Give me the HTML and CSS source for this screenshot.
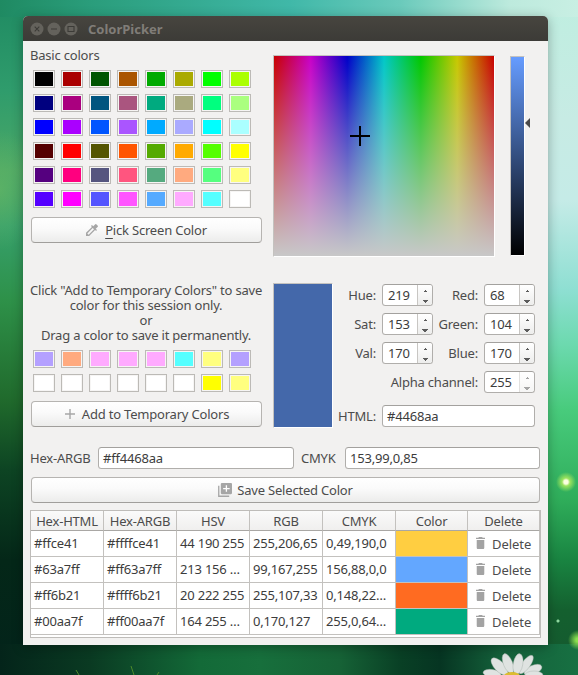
FILE: index.html
```html
<!DOCTYPE html>
<html lang="en">
<head>
<meta charset="utf-8">
<title>ColorPicker</title>
<link rel="stylesheet" href="styles.css">
</head>
<body>
<svg class="daisy" width="64" height="22" viewBox="0 0 64 22">
  <g fill="#dfe3e1" stroke="#a3afa8" stroke-width=".4">
    <ellipse cx="10" cy="20.5" rx="9" ry="4" transform="rotate(8 10 20.5)"/>
    <ellipse cx="51" cy="17" rx="9.5" ry="4.6" transform="rotate(-24 51 17)"/>
    <ellipse cx="52" cy="22" rx="9" ry="4"/>
    <ellipse cx="17.5" cy="13.5" rx="11" ry="5" transform="rotate(46 17.5 13.5)"/>
    <ellipse cx="44" cy="11.5" rx="11" ry="4.2" transform="rotate(-54 44 11.5)"/>
    <ellipse cx="26" cy="10.5" rx="10.5" ry="4.6" transform="rotate(68 26 10.5)"/>
    <ellipse cx="36" cy="11" rx="10.5" ry="4.8" transform="rotate(-80 36 11)"/>
  </g>
  <ellipse cx="30" cy="23" rx="8" ry="4" fill="#dcbc30"/>
</svg>
<svg class="grass" width="100" height="14" viewBox="0 0 100 14" fill="none" stroke="#4f8a2a">
  <path d="M6 14 3 9M61 14 58 5M84 14 86 11"/>
</svg>
<main class="window">
  <header class="titlebar">
    <svg width="48" height="14" viewBox="0 0 48 14">
      <g fill="#64625c"><circle cx="7" cy="7" r="6.5"/><circle cx="24" cy="7" r="6.5"/><circle cx="41" cy="7" r="6.5"/></g>
      <path d="M4.7 4.7l4.6 4.6M9.3 4.7 4.7 9.3M21 7h6M38 4.5h6v5h-6z" fill="none" stroke="#3c3b37" stroke-width="1.1"/>
    </svg>
    <h1>ColorPicker</h1>
  </header>

  <div class="content">
    <section class="top">
      <div class="left">
        <div class="label basic">Basic colors</div>
        <div class="swatches" id="basic"></div>
        <button class="btn pick">
          <svg width="16" height="16" viewBox="0 0 24 24" fill="#a6a6a6"><path d="M20.71 5.63l-2.34-2.34a1 1 0 0 0-1.41 0l-3.12 3.12-1.93-1.91-1.41 1.41 1.42 1.42L3 16.25V21h4.75l8.92-8.92 1.42 1.42 1.41-1.41-1.92-1.92 3.12-3.12c.4-.4.4-1.03.01-1.42zM6.92 19 5 17.08l8.06-8.06 1.92 1.92L6.92 19z"/></svg>
          <span><u>P</u>ick Screen Color</span>
        </button>
      </div>
      <div class="field"><svg class="cross" width="20" height="20"><path d="M10 0v20M0 10h20" stroke="#000" stroke-width="2"/></svg></div>
      <div class="value"></div>
      <svg class="arrow" width="6" height="10"><path d="M0 5 5 0v10z" fill="#4a4a4a"/></svg>
    </section>

    <section class="middle">
      <div class="left">
        <div class="hint"><div>Click "Add to Temporary Colors" to save</div><div>color for this session only.</div><div>or</div><div>Drag a color to save it permanently.</div></div>
        <div class="swatches" id="temporary"></div>
        <button class="btn add">
          <svg width="12" height="12"><path d="M6 1v10M1 6h10" stroke="#a6a6a6" stroke-width="1.4"/></svg>
          <span>Add to Temporary Colors</span>
        </button>
      </div>
      <div class="preview"></div>
      <div class="form">
        <label>Hue:</label><div class="spin"><span>219</span><i></i></div>
        <label>Red:</label><div class="spin"><span>68</span><i></i></div>
        <label>Sat:</label><div class="spin"><span>153</span><i></i></div>
        <label>Green:</label><div class="spin"><span>104</span><i></i></div>
        <label>Val:</label><div class="spin"><span>170</span><i></i></div>
        <label>Blue:</label><div class="spin"><span>170</span><i></i></div>
        <label class="alpha">Alpha channel:</label><div class="spin off"><span>255</span><i></i></div>
        <label class="html">HTML:</label><div class="input html-in">#4468aa</div>
      </div>
    </section>

    <section class="codes">
      <label class="l-argb">Hex-ARGB</label><div class="input argb">#ff4468aa</div>
      <label class="l-cmyk">CMYK</label><div class="input cmyk">153,99,0,85</div>
    </section>

    <button class="btn save">
      <svg width="14" height="14" viewBox="0 0 15 15"><path d="M.8 3v11.2H12" fill="none" stroke="#a6a6a6" stroke-width="1.4"/><rect x="3" y="0" width="12" height="12" rx="1.2" fill="#a6a6a6"/><path d="M9 2.5v7M5.5 6h7" stroke="#fff" stroke-width="1.4"/></svg>
      <span>Save Selected Color</span>
    </button>

    <div class="table" id="table"></div>
  </div>
</main>
<script src="app.js"></script>
</body>
</html>
```
FILE: app.js
```js
const basic = [
  '000000 aa0000 005500 aa5500 00aa00 aaaa00 00ff00 aaff00',
  '00007f aa007f 00557f aa557f 00aa7f aaaa7f 00ff7f aaff7f',
  '0000ff aa00ff 0055ff aa55ff 00aaff aaaaff 00ffff aaffff',
  '550000 ff0000 555500 ff5500 55aa00 ffaa00 55ff00 ffff00',
  '55007f ff007f 55557f ff557f 55aa7f ffaa7f 55ff7f ffff7f',
  '5500ff ff00ff 5555ff ff55ff 55aaff ffaaff 55ffff ffffff'
];
const temporary = [
  'b4a0ff ffaa7f ffaaff ffaaff ffaaff 55ffff ffff7f b4a0ff',
  'ffffff ffffff ffffff ffffff ffffff ffffff ffff00 ffff7f'
];
const fill = (id, rows) => {
  document.getElementById(id).innerHTML = rows.join(' ').split(' ')
    .map(c => `<span class="swatch" style="background-color:#${c}"></span>`).join('');
};
fill('basic', basic);
fill('temporary', temporary);

const heads = ['Hex-HTML', 'Hex-ARGB', 'HSV', 'RGB', 'CMYK', 'Color', 'Delete'];
const saved = [
  ['#ffce41', '#ffffce41', '44 190 255', '255,206,65', '0,49,190,0'],
  ['#63a7ff', '#ff63a7ff', '213 156 …', '99,167,255', '156,88,0,0'],
  ['#ff6b21', '#ffff6b21', '20 222 255', '255,107,33', '0,148,22…'],
  ['#00aa7f', '#ff00aa7f', '164 255 …', '0,170,127', '255,0,64…']
];
const trash = '<svg width="9" height="12" viewBox="0 0 10 12" preserveAspectRatio="none" fill="#a3a3a3"><path d="M3.2 0h3.6l.6.8H10v1.3H0V.8h2.6zM.8 3h8.4v7.7c0 .7-.5 1.3-1.3 1.3H2.1c-.8 0-1.3-.6-1.3-1.3z"/></svg>';
document.getElementById('table').innerHTML =
  heads.map(h => `<div class="th">${h}</div>`).join('') +
  saved.map(r => r.map(t => `<div class="td">${t}</div>`).join('') +
    `<div class="td chip" style="background-color:${r[0]}"></div><div class="td del">${trash}<span>Delete</span></div>`).join('');
```
FILE: styles.css
```css
* { box-sizing: border-box; }

body {
  margin: 0;
  width: 578px;
  height: 675px;
  padding: 16px 30px 0 23px;
  position: relative;
  overflow: hidden;
  font: 13px/15px "Noto Sans", "Open Sans", sans-serif;
  letter-spacing: -0.2px;
  color: #4c4c4c;
  background:
    radial-gradient(circle at 566px 482px, #fbffe0 0 2px, #9be35e 4px, rgba(90, 205, 90, 0) 10px),
    radial-gradient(circle at 578px 640px, #8be050 0 2px, rgba(60, 170, 70, 0) 10px),
    radial-gradient(circle at 558px 621px, #8fd9a0 0 1px, transparent 2px),
    radial-gradient(ellipse 40px 60px at 0 190px, rgba(105, 185, 100, .6), transparent),
    linear-gradient(to right, #1f8a62 0, #2a9d7b 90px, #40b8a8 290px, #6acabb 400px, #bdeadd 510px, #c8efe3 578px) 0 0 / 578px 17px no-repeat,
    linear-gradient(to right, #04241a, #0a3a22 90px, #136a38 200px, #176f3c 260px, #166236 340px, #094025 400px, #063522 440px, #14603a 500px, #177042 578px) 0 644px / 578px 31px no-repeat,
    linear-gradient(#1f8a62 0, #2f9c6c 90px, #4aa766 170px, #36a06c 225px, #2e9149 300px, #206a2c 400px, #0d4423 470px, #042718 560px, #03241a 650px) 0 0 / 290px 675px no-repeat,
    linear-gradient(#bfeee0 0, #c7ebe4 120px, #c5ebe7 200px, #8edfd2 290px, #6cd9ae 345px, #48cb7c 410px, #2fad5a 500px, #198441 560px, #14602f 610px, #15582f 675px);
}

.daisy { position: absolute; left: 482px; top: 653px; }
.grass { position: absolute; left: 73px; top: 661px; }

.window {
  position: relative;
  width: 525px;
  height: 629px;
  background: #f2f1f0;
  border-radius: 5px 5px 0 0;
  box-shadow: 0 2px 12px rgba(0, 0, 0, .3);
}

.titlebar {
  height: 25px;
  display: flex;
  align-items: center;
  gap: 10.5px;
  padding-left: 6.5px;
  border-radius: 5px 5px 0 0;
  background: linear-gradient(#47453f, #3c3b37);
}
h1 { margin: 1px 0 0; font-size: 13px; line-height: 15px; letter-spacing: 0; color: #807d78; }

.content { padding: 0 7px; }
.top { display: flex; height: 242px; }
.left { width: 243px; flex: none; }
.basic { padding-top: 7px; height: 29px; letter-spacing: -.2px; }

.swatches {
  display: grid;
  grid-template-columns: repeat(8, 22px);
  grid-auto-rows: 18px;
  gap: 6px;
  margin-left: 3px;
}
.swatch { border: 1px solid #bcbab6; box-shadow: inset 0 0 0 1px #f6f5f4; }

.btn {
  display: flex;
  align-items: center;
  justify-content: center;
  gap: 5px;
  width: 231px;
  height: 26px;
  margin: 9px 0 0 1px;
  padding: 0;
  border: 1px solid #b6b4b1;
  border-bottom-color: #a09e9b;
  border-radius: 4px;
  background: linear-gradient(#fff, #fafafa 45%, #ececeb);
  font: inherit;
  letter-spacing: inherit;
  color: inherit;
}
.pick { padding-right: 2px; }
.pick u { text-underline-offset: 3px; }
.add { gap: 6px; }

.field {
  position: relative;
  width: 222px;
  height: 202px;
  margin-top: 14px;
  border: 1px solid;
  border-color: #c4c2bf #fff #fff #c4c2bf;
  background:
    linear-gradient(rgba(200, 200, 200, 0), #c8c8c8),
    linear-gradient(to right, #c80000, #c800c8, #0000c8, #00c8c8, #00c800, #c8c800, #c80000);
}
.cross { position: absolute; left: 76px; top: 70px; }
.value {
  width: 15px;
  height: 200px;
  margin: 15px 0 0 15px;
  border: 1px solid;
  border-color: #c4c2bf #fff #fff #c4c2bf;
  background: linear-gradient(#669cff, #000);
}
.arrow { margin-top: 77px; }

.middle { display: flex; height: 164px; }
.hint { height: 67px; width: 232px; text-align: center; white-space: nowrap; }
.preview {
  flex: none;
  width: 60px;
  height: 145px;
  border: 1px solid;
  border-color: #c4c2bf #fff #fff #c4c2bf;
  background: #4468aa;
}
.form {
  flex: none;
  display: grid;
  grid-template-columns: 43px 51px 39px 51px;
  grid-template-rows: repeat(4, 22px) 22px;
  column-gap: 6px;
  row-gap: 7px;
  align-items: center;
  height: 144px;
  margin: 1px 0 0 0;
}
.form label { justify-self: end; white-space: nowrap; }
.form .alpha { grid-column: 1 / 4; }
.form .html, .html-in { margin-top: 10px; }
.html-in { grid-column: 2 / 5; }

.input, .spin {
  height: 22px;
  border: 1px solid #b0aeab;
  border-top-color: #a3a19e;
  border-radius: 3.5px;
  background: #fff;
  color: #3c3c3c;
  line-height: 21px;
}
.input { padding-left: 4px; }
.spin { display: flex; overflow: hidden; }
.spin span { width: 34px; padding-left: 5px; }
.spin i {
  flex: 1;
  border-left: 1px solid #c8c6c3;
  background:
    conic-gradient(from 135deg at 50% 0, #5c5c5c 90deg, transparent 0) 50% 5px / 5px 2px no-repeat,
    conic-gradient(from -45deg at 50% 100%, #5c5c5c 90deg, transparent 0) 50% 14px / 6px 3px no-repeat,
    linear-gradient(#fff, #ededec);
}
.spin i { background:
    conic-gradient(from 135deg at 50% 0, #5c5c5c 90deg, transparent 0) 50% 5px / 5px 2px no-repeat,
    conic-gradient(from -45deg at 50% 100%, #5c5c5c 90deg, transparent 0) 50% 15px / 6px 3px no-repeat,
    linear-gradient(#fff, #ededec); }
.spin.off i { filter: opacity(.55); }

.codes { display: flex; height: 30px; }
.codes label { line-height: 23px; }
.l-argb { width: 68px; }
.argb { width: 196px; }
.l-cmyk { width: 51px; padding-left: 7px; }
.cmyk { width: 195px; }

.save { width: 509px; margin: 0 0 7px 1px; }

.table {
  display: grid;
  grid-template-columns: repeat(5, 73px) 72px 72px;
  grid-template-rows: 20px repeat(4, 26px);
  width: 511px;
  height: 128px;
  border: 1px solid #bebcb9;
  background: #fff;
}
.th {
  text-align: center;
  line-height: 21px;
  border-right: 1px solid #c3c1be;
  border-bottom: 1px solid #a9a7a4;
  background: linear-gradient(#fafafa, #f0efee);
}
.td {
  padding-left: 3px;
  line-height: 25px;
  white-space: nowrap;
  border-right: 1px solid #c3c1be;
  border-bottom: 1px solid #c3c1be;
  color: #3c3c3c;
}
.chip { background-clip: padding-box; }
.del { display: flex; align-items: center; gap: 7px; padding-left: 8px; color: #4c4c4c; letter-spacing: -.05px; }
.del svg { margin-top: -2px; }
.del span { margin-top: 1px; }
```
